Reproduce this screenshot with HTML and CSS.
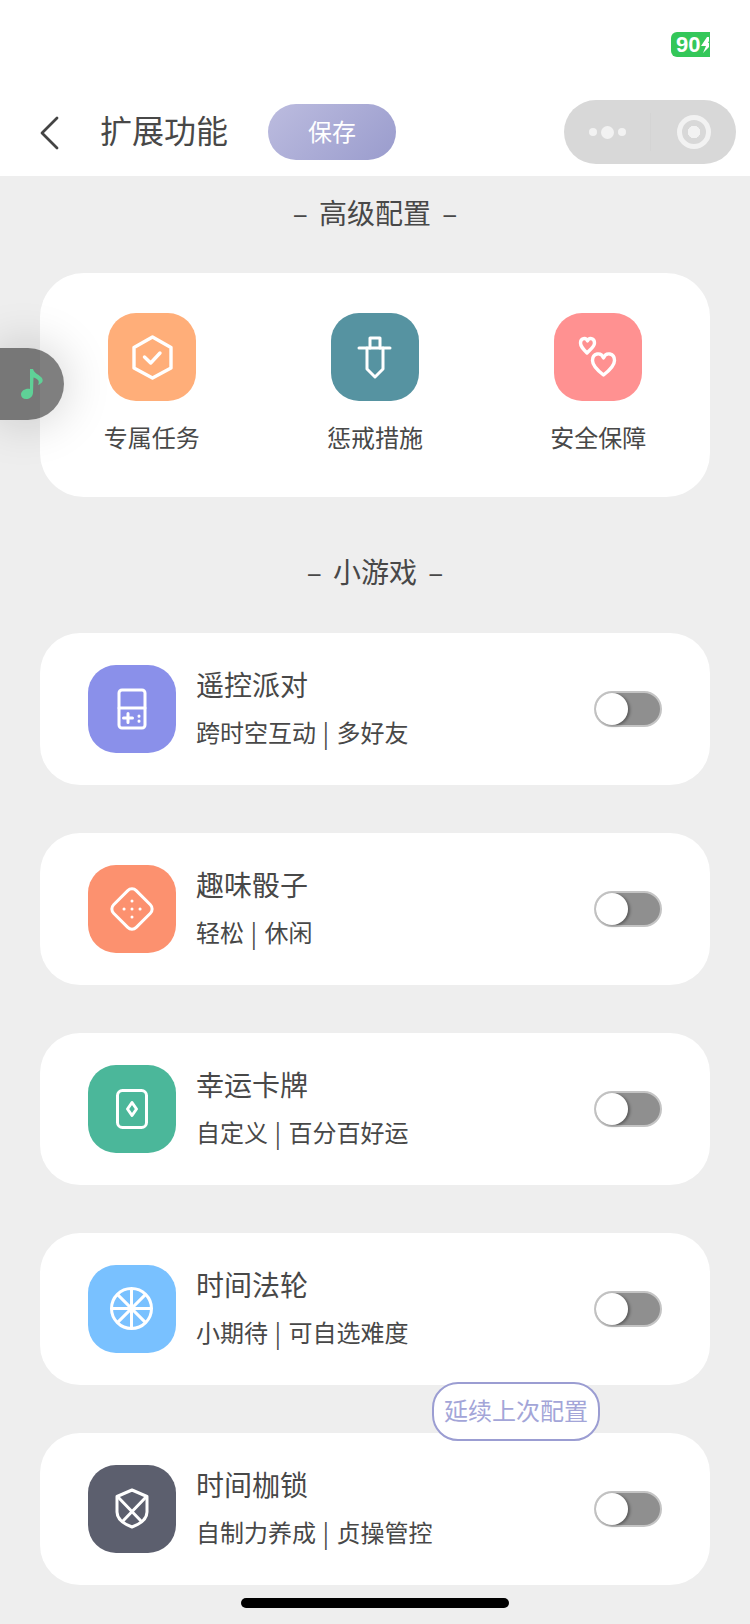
FILE: index.html
```html
<!DOCTYPE html>
<html>
<head>
    <title>扩展功能</title>
    <link rel="stylesheet" href="styles.css">
</head>
<body>
    <div class="page">
        <div class="header">
            <div class="status-bar">
                <div class="battery">
                    <span>90</span>
                    <svg class="bolt" width="9" height="25" viewBox="0 0 9 25">
                        <path d="M7 5 L1 14 H6 L3 21 L13 11 H8 L11 5 Z" fill="#fff"/>
                    </svg>
                </div>
            </div>
            <div class="nav">
                <svg class="back" width="20" height="34" viewBox="0 0 20 34">
                    <path d="M18 2 L3 17 L18 32" fill="none" stroke="#444" stroke-width="2.8" stroke-linecap="round" stroke-linejoin="round"/>
                </svg>
                <div class="nav-title">扩展功能</div>
                <div class="save-btn">保存</div>
                <div class="capsule">
                    <div class="capsule-dots">
                        <span class="dot"></span>
                        <span class="dot dot-big"></span>
                        <span class="dot"></span>
                    </div>
                    <div class="capsule-line"></div>
                    <div class="capsule-target">
                        <span class="target-dot"></span>
                    </div>
                </div>
            </div>
        </div>

        <div class="section-title first">– 高级配置 –</div>

        <div class="card config-card">
            <div class="config-item">
                <div class="tile orange">
                    <svg width="88" height="88" viewBox="0 0 88 88" fill="none" stroke="#fff" stroke-width="3.400" stroke-linecap="round" stroke-linejoin="round">
                        <path d="M44.500 24 L63 34.500 L63 55 L44.500 65 L26 55 L26 34.500 Z"/>
                        <path d="M36.500 44 L42.700 50 L52 40"/>
                    </svg>
                </div>
                <div class="config-label">专属任务</div>
            </div>
            <div class="config-item">
                <div class="tile teal">
                    <svg width="88" height="88" viewBox="0 0 88 88" fill="none" stroke="#fff" stroke-width="3" stroke-linecap="round" stroke-linejoin="round">
                        <path d="M28 35 H59"/>
                        <path d="M39 35 V25 H49 V35"/>
                        <path d="M36 35 V56 L44 64 L52 56 V35"/>
                    </svg>
                </div>
                <div class="config-label">惩戒措施</div>
            </div>
            <div class="config-item">
                <div class="tile pink">
                    <svg width="88" height="88" viewBox="0 0 88 88" fill="none" stroke="#fff" stroke-width="3.400" stroke-linejoin="round">
                        <path d="M33 40 C29 36 26.500 33.500 26.500 30 C26.500 25 32 24 33.500 28 C35 24 40.500 25 40.500 30 C40.500 33.500 37 36 33 40 Z"/>
                        <path d="M49.500 62 C43 57 38.500 52.500 38.500 47.500 C38.500 40 47 38.500 49.500 45 C52 38.500 60.500 40 60.500 47.500 C60.500 52.500 56 57 49.500 62 Z"/>
                    </svg>
                </div>
                <div class="config-label">安全保障</div>
            </div>
        </div>

        <div class="section-title second">– 小游戏 –</div>

        <div class="game-list">
            <div class="card game-card">
                <div class="tile purple">
                    <svg width="88" height="88" viewBox="0 0 88 88" fill="none" stroke="#fff" stroke-width="3" stroke-linecap="round">
                        <rect x="31" y="25" width="26" height="38" rx="3"/>
                        <path d="M31 43 H57"/>
                        <path d="M35.500 53 H44.500 M40 48.500 V57.500"/>
                        <path d="M51 51 V51.200 M51 56 V56.200"/>
                    </svg>
                </div>
                <div class="game-text">
                    <div class="game-name">遥控派对</div>
                    <div class="game-desc">跨时空互动 <span class="sep">|</span> 多好友</div>
                </div>
                <div class="toggle"><span class="knob"></span></div>
            </div>
            <div class="card game-card">
                <div class="tile coral">
                    <svg width="88" height="88" viewBox="0 0 88 88" fill="none" stroke="#fff" stroke-width="3" stroke-linecap="round">
                        <rect x="28" y="28" width="32" height="32" rx="6" transform="rotate(45 44 44)"/>
                        <path d="M44 36 V36.100 M44 44 V44.100 M44 52 V52.100 M36 44 H36.100 M52 44 H52.100"/>
                    </svg>
                </div>
                <div class="game-text">
                    <div class="game-name">趣味骰子</div>
                    <div class="game-desc">轻松 <span class="sep">|</span> 休闲</div>
                </div>
                <div class="toggle"><span class="knob"></span></div>
            </div>
            <div class="card game-card">
                <div class="tile green">
                    <svg width="88" height="88" viewBox="0 0 88 88" fill="none" stroke="#fff" stroke-width="3" stroke-linejoin="round">
                        <rect x="29.500" y="25.500" width="29" height="37" rx="5"/>
                        <path d="M44 37.500 L48.500 44 L44 50.500 L39.500 44 Z"/>
                    </svg>
                </div>
                <div class="game-text">
                    <div class="game-name">幸运卡牌</div>
                    <div class="game-desc">自定义 <span class="sep">|</span> 百分百好运</div>
                </div>
                <div class="toggle"><span class="knob"></span></div>
            </div>
            <div class="card game-card">
                <div class="tile blue">
                    <svg width="88" height="88" viewBox="0 0 88 88" fill="none" stroke="#fff" stroke-width="3">
                        <circle cx="43.500" cy="43.500" r="20"/>
                        <path d="M43.500 23.500 V63.500 M23.500 43.500 H63.500 M29.400 29.400 L57.600 57.600 M57.600 29.400 L29.400 57.600"/>
                    </svg>
                </div>
                <div class="game-text">
                    <div class="game-name">时间法轮</div>
                    <div class="game-desc">小期待 <span class="sep">|</span> 可自选难度</div>
                </div>
                <div class="toggle"><span class="knob"></span></div>
            </div>
            <div class="card game-card">
                <div class="tile slate">
                    <svg width="88" height="88" viewBox="0 0 88 88" fill="none" stroke="#fff" stroke-width="3" stroke-linejoin="round">
                        <path d="M44 25 L59 31.500 V47 C59 54 52 59 44 62 C36 59 29 54 29 47 V31.500 Z"/>
                        <path d="M29 31 L54 57 M59 31 L34 57"/>
                    </svg>
                </div>
                <div class="game-text">
                    <div class="game-name">时间枷锁</div>
                    <div class="game-desc">自制力养成 <span class="sep">|</span> 贞操管控</div>
                </div>
                <div class="toggle"><span class="knob"></span></div>
            </div>
        </div>

        <div class="music-btn">
            <svg width="24" height="32" viewBox="0 0 24 32">
                <path d="M10 1 L13 1 C14 5 18 6 21 9 C24 12 23 15 18 17 C20 13 18 11 13.500 9.500 L13 25 C12.500 29 9.500 31 6 31 C3 31 1 29 1 26.500 C1 22.500 6 20 10 21 Z" fill="#5fd197"/>
            </svg>
        </div>
        <div class="resume-tag">延续上次配置</div>
        <div class="home-bar"></div>
    </div>
</body>
</html>
```

FILE: styles.css
```css
* {
    box-sizing: border-box;
}
html, body {
    margin: 0;
    padding: 0;
}
body {
    background: #eee;
    color: #484848;
    font-family: "Noto Sans CJK SC", "Noto Sans", sans-serif;
}
.page {
    position: relative;
    width: 750px;
    height: 1624px;
    overflow: hidden;
}

/* header */
.header {
    height: 176px;
    background: #fff;
}
.status-bar {
    height: 100px;
    padding: 32px 40px 0 0;
    display: flex;
    justify-content: flex-end;
}
.battery {
    width: 39px;
    height: 25px;
    background: #34c759;
    border-radius: 6px 0 0 6px;
    color: #fff;
    font-family: "Liberation Sans", sans-serif;
    font-size: 22px;
    font-weight: 700;
    line-height: 25px;
    padding-left: 5px;
    display: flex;
    white-space: nowrap;
}
.bolt {
    flex: none;
}
.nav {
    height: 64px;
    padding: 0 14px 0 39px;
    display: flex;
    align-items: center;
}
.back {
    flex: none;
    margin-top: 2px;
}
.nav-title {
    margin-left: 41px;
    margin-bottom: 6px;
    width: 127px;
    font-size: 32px;
    line-height: 44px;
    white-space: nowrap;
}
.save-btn {
    margin-left: 41px;
    width: 128px;
    height: 56px;
    border-radius: 28px;
    background: linear-gradient(135deg, #bcbcdf, #9a9ccd);
    color: #fff;
    font-size: 24px;
    line-height: 53px;
    text-align: center;
}
.capsule {
    margin-left: auto;
    width: 172px;
    height: 64px;
    border-radius: 32px;
    background: #d8d8d8;
    display: flex;
    align-items: center;
}
.capsule-dots {
    width: 86px;
    display: flex;
    align-items: center;
    justify-content: center;
    gap: 4px;
}
.dot {
    width: 8px;
    height: 8px;
    border-radius: 50%;
    background: #f2f2f2;
}
.dot-big {
    width: 13px;
    height: 13px;
}
.capsule-line {
    width: 1px;
    height: 38px;
    background: #d4d4d4;
}
.capsule-target {
    flex: 1;
    display: flex;
    justify-content: center;
}
.target-dot {
    display: block;
    width: 34px;
    height: 34px;
    border-radius: 50%;
    border: 5px solid #f2f2f2;
    background: radial-gradient(circle, #f2f2f2 0 6px, transparent 6.5px);
}

/* sections */
.section-title {
    text-align: center;
    font-size: 28px;
    line-height: 40px;
    word-spacing: 5px;
}
.section-title.first {
    margin-top: 16px;
}
.section-title.second {
    margin-top: 54px;
}
.card {
    margin: 0 40px;
    background: #fff;
    border-radius: 40px;
}
.config-card {
    margin-top: 41px;
    height: 224px;
    border-radius: 44px;
    display: grid;
    grid-template-columns: repeat(3, 1fr);
    padding-top: 40px;
}
.config-item {
    display: flex;
    flex-direction: column;
    align-items: center;
}
.config-label {
    margin-top: 18px;
    font-size: 24px;
    line-height: 36px;
}
.tile {
    flex: none;
    width: 88px;
    height: 88px;
    border-radius: 28px;
}
.tile svg {
    display: block;
}
.orange { background: #ffae79; }
.teal { background: #5693a1; }
.pink { background: #ff9191; }
.purple { background: #8a90ea; }
.coral { background: #fc916f; }
.green { background: #4bb79a; }
.blue { background: #79c1ff; }
.slate { background: #5c5f6e; }

/* games */
.game-list {
    margin-top: 42px;
    display: flex;
    flex-direction: column;
    gap: 48px;
}
.game-card {
    height: 152px;
    padding: 0 48px;
    display: flex;
    align-items: center;
}
.game-text {
    margin-left: 20px;
    margin-bottom: 5px;
    flex: 1;
}
.game-name {
    font-size: 28px;
    line-height: 40px;
}
.game-desc {
    margin-top: 11px;
    font-size: 24px;
    line-height: 34px;
}
.sep {
    display: inline-block;
    font-family: "Liberation Sans", sans-serif;
    font-size: 30px;
    line-height: 30px;
    margin: 0 1px;
    transform: scaleX(.6);
    vertical-align: -2px;
}
.toggle {
    position: relative;
    width: 68px;
    height: 36px;
    border-radius: 18px;
    background: #8f8f8f;
    border: 2px solid #c4c4c4;
}
.knob {
    position: absolute;
    left: 0;
    top: 0;
    width: 32px;
    height: 32px;
    border-radius: 50%;
    background: #fff;
    box-shadow: 2px 1px 3px rgba(0, 0, 0, .35);
}

/* things lying over the page */
.music-btn {
    position: absolute;
    left: 0;
    top: 348px;
    width: 64px;
    height: 72px;
    border-radius: 0 36px 36px 0;
    background: rgba(0, 0, 0, .5);
    box-shadow: 0 0 50px rgba(0, 0, 0, .2);
    padding: 20px 0 0 20px;
}
.music-btn svg {
    display: block;
}
.resume-tag {
    position: absolute;
    left: 432px;
    top: 1382px;
    width: 168px;
    height: 59px;
    border: 2px solid #9b9dd2;
    border-radius: 26px;
    background: #fff;
    color: #a3a5d8;
    font-size: 24px;
    line-height: 51px;
    text-align: center;
    white-space: nowrap;
}
.home-bar {
    position: absolute;
    left: 241px;
    top: 1598px;
    width: 268px;
    height: 10px;
    border-radius: 5px;
    background: #000;
}
```
